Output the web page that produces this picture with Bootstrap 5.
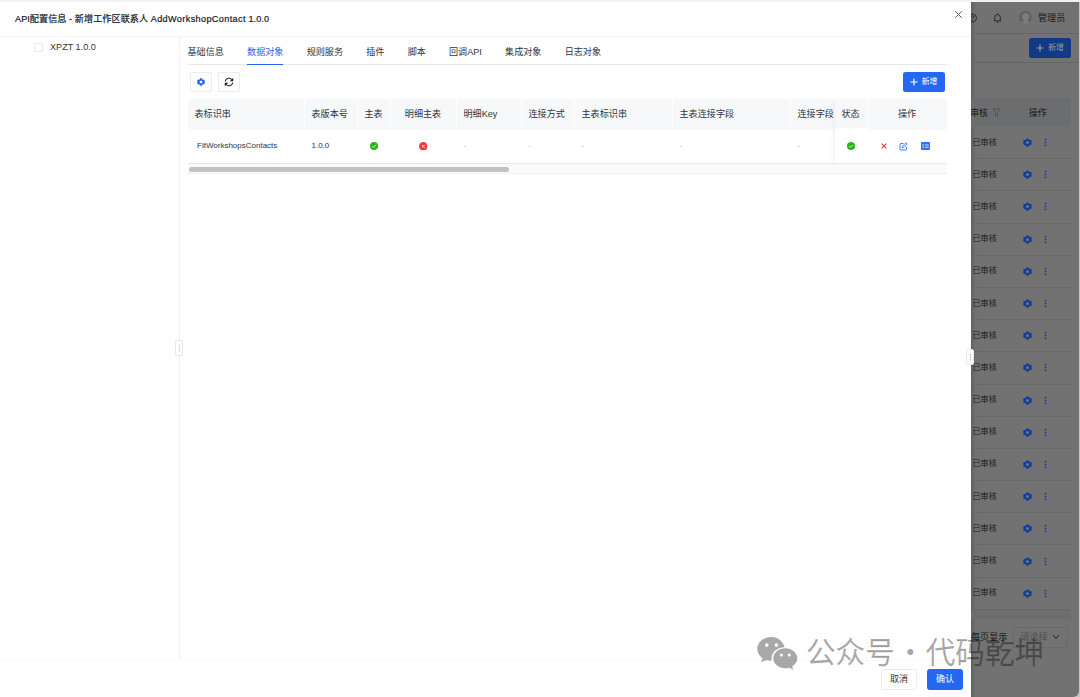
<!DOCTYPE html>
<html lang="zh-CN">
<head>
<meta charset="utf-8">
<title>API配置信息</title>
<link href="https://cdn.jsdelivr.net/npm/bootstrap@5.3.0/dist/css/bootstrap.min.css" rel="stylesheet">
<style>
:root{--blue:#2468f2}
body{font:9.1px/14px "Liberation Sans","Noto Sans CJK SC",sans-serif;color:#303540;background:#f1f1f1;width:1080px;height:697px;overflow:hidden;position:relative}
.win{height:695px;margin-top:2px;background:#c4c4c4}
.drawer{width:971px;background:#fff;position:relative}
.head{height:35px;border-bottom:1px solid #f6f6f6;padding:0 8px 0 15px}
.head h1{font-size:9.1px;font-weight:400;margin:0;line-height:14px;color:#15181f;letter-spacing:.07px;-webkit-text-stroke:.2px}
.head h1 span{letter-spacing:.38px}
.tree{width:179.5px;border-right:1px solid #f0f0f0;height:623px;padding:3px 0 0 34px;position:relative}
.tree i{width:9px;height:9px;border:1px solid #e9e9e9;border-radius:1px;margin-right:7px}
.grip{position:absolute;background:#fff;border:1px solid #e6e6e6;border-radius:2px;width:8px;height:16px}
.pane{width:760px;margin-left:8px}
.tabs{height:28px;border-bottom:1px solid #e8e8ea}
.tabs a{color:#303540;text-decoration:none;height:28px;padding-top:8px;margin-right:23.2px;white-space:nowrap}
.tabs a.on{color:var(--blue);border-bottom:1.5px solid var(--blue)}
.tools{height:34px;padding:0 3px 0 2px}
.sq{width:22px;height:20px;border:1px solid #ececee;border-radius:2px;background:#fff;padding:0}
.add{height:20px;width:42px;border:0;border-radius:2.5px;background:var(--blue);color:#fff;font-size:7.8px;padding:0;gap:4px}
.grid-t{width:759px;display:grid;grid-template-columns:117px 53px 33px 66px 65px 53px 98px 118px 44px 33px 79px}
.th-c{height:28.5px;background:#f7f8fa;border-right:1px solid #fff;padding:1px 7px 0;display:flex;align-items:center;white-space:nowrap;overflow:hidden;color:#303540}
.td-c{height:36.5px;border-bottom:1px solid #e8e8e8;padding:2px 7px 0;display:flex;align-items:center;font-size:8px;white-space:nowrap;box-shadow:inset 0 4px 4px -3px #f4f4f4}
.c{justify-content:center}.m{color:#bbb}
.th-c:last-child,.th-c.end{border-right:0}
.fx{box-shadow:-3px 0 4px -1px rgba(0,0,0,.05)}
.sb{width:759px;height:10px;background:#fafafa;border-bottom:1px solid #f0f0f0;padding:3px 1px 0}
.sb div{width:320px;height:5px;border-radius:3px;background:#c1c1c1}
.foot{height:36px;border-top:1px solid #f9f9f9;padding:7.5px 8px 0 0}
.foot button{height:21px;width:36px;font-size:9px;border-radius:2.5px;padding:0;border:1px solid #ececec;background:#fff;color:#303540}
.foot button.ok{background:var(--blue);border-color:var(--blue);color:#fff}
.back{width:108px;background:#727272;border-bottom-right-radius:6px;overflow:hidden;color:#191b20;box-shadow:inset 4px 0 4px -3px rgba(0,0,0,.25)}
.back .top{height:32px;border-bottom:1px solid #666}
.back .bar{height:29px;border-bottom:1px solid #666;padding-right:8px}
.back .add{background:#133a87;color:#999}
.back .hd{height:29px;margin:35px 8px 0 0;background:#6c6d6f}
.row-b{height:32.2px;margin-right:8px;border-bottom:1px solid #686868;font-size:8.1px;padding:0 0 0 1.5px}
.row-b svg{color:#123f99}
.wm{position:absolute;left:757px;top:632px;color:rgba(0,0,0,.34);font:350 29.6px/38px "Noto Sans CJK SC",sans-serif;white-space:pre;z-index:5}
.wm .txt{-webkit-text-stroke:.3px rgba(0,0,0,.25)}
.sel{width:55px;height:21px;border:1px solid #696969;border-radius:2px;color:#525252}
</style>
</head>
<body>
<svg class="d-none">
<symbol id="gear" viewBox="0 0 24 24"><path fill="currentColor" fill-rule="evenodd" d="M9 1h6l1 3.300 2.200 1.200 3.300-.8 2.500 5-2.300 2.300 2.300 2.300-2.500 5-3.300-.8-2.200 1.200-1 3.300H9l-1-3.300-2.200-1.200-3.300.8-2.500-5L2.300 12 0 9.700l2.500-5 3.300.8L8 4.300zM12 8a4 4 0 1 0 0 8 4 4 0 0 0 0-8z"/></symbol>
<symbol id="plus" viewBox="0 0 10 10"><path d="M5 .5v9M.5 5h9" stroke="currentColor" stroke-width="1.500"/></symbol>
<symbol id="ok" viewBox="0 0 16 16"><circle cx="8" cy="8" r="8" fill="#27b615"/><path d="M4.500 8.200l2.500 2.500 4.500-4.700" fill="none" stroke="#fff" stroke-width="1.600"/></symbol>
<symbol id="bad" viewBox="0 0 16 16"><circle cx="8" cy="8" r="8" fill="#f33b3b"/><path d="M5.500 5.500l5 5m0-5l-5 5" stroke="#fff" stroke-width="1.600"/></symbol>
<symbol id="dots" viewBox="0 0 4 12"><path fill="currentColor" d="M.9 1h2.200v2H.9zM.9 5h2.200v2H.9zM.9 9h2.200v2H.9z"/></symbol>
</svg>
<div class="win d-flex">
<section class="drawer flex-shrink-0">
 <header class="head d-flex align-items-center justify-content-between">
  <h1>API配置信息 - 新增工作区联系人 <span>AddWorkshopContact</span> 1.0.0</h1>
  <svg width="9" height="9" viewBox="0 0 9 9" style="margin-bottom:10px"><path d="M1.300 1.300l6.400 6.400M7.700 1.300L1.300 7.700" stroke="#444" stroke-width=".9"/></svg>
 </header>
 <div class="d-flex">
  <aside class="tree"><div class="d-flex align-items-center"><i></i>XPZT 1.0.0</div>
   <div class="grip d-flex align-items-center justify-content-center" style="left:175px;top:303px"><svg width="3" height="7" viewBox="0 0 4 12" color="#bbb"><use href="#dots"/></svg></div>
  </aside>
  <main class="pane">
   <nav class="tabs d-flex"><a>基础信息</a><a class="on">数据对象</a><a>规则服务</a><a>插件</a><a>脚本</a><a>回调API</a><a>集成对象</a><a>日志对象</a></nav>
   <div class="tools d-flex align-items-center gap-2">
    <button class="sq d-flex align-items-center justify-content-center"><svg width="8" height="8" color="#2468f2"><use href="#gear"/></svg></button>
    <button class="sq d-flex align-items-center justify-content-center" style="margin-left:-2px"><svg width="10" height="10" viewBox="0 0 20 20" fill="none" stroke="#222" stroke-width="2.200"><path d="M2.500 9a7.500 7.500 0 0 1 13.500-3.500M17.500 11A7.500 7.500 0 0 1 4 14.500"/><path fill="#222" stroke="none" d="M18.500 1.500v7h-7zM1.500 18.500v-7h7z"/></svg></button>
    <button class="add ms-auto d-flex align-items-center justify-content-center"><svg width="8" height="8"><use href="#plus"/></svg>新增</button>
   </div>
   <div class="grid-t">
    <div class="th-c">表标识串</div><div class="th-c">表版本号</div><div class="th-c">主表</div><div class="th-c c">明细主表</div><div class="th-c">明细Key</div><div class="th-c">连接方式</div><div class="th-c">主表标识串</div><div class="th-c">主表连接字段</div><div class="th-c end pe-0">连接字段</div><div class="th-c fx">状态</div><div class="th-c end c">操作</div>
    <div class="td-c" style="padding-left:9.5px">FltWorkshopsContacts</div><div class="td-c">1.0.0</div><div class="td-c c"><svg width="8" height="8"><use href="#ok"/></svg></div><div class="td-c c"><svg width="8.500" height="8.500"><use href="#bad"/></svg></div><div class="td-c m">-</div><div class="td-c m">-</div><div class="td-c m">-</div><div class="td-c m">-</div><div class="td-c m">-</div><div class="td-c c fx"><svg width="8" height="8"><use href="#ok"/></svg></div>
    <div class="td-c" style="padding-left:13px"><svg width="6" height="6" viewBox="0 0 6 6"><path d="M.7.7l4.600 4.600m0-4.600L.7 5.300" stroke="#e33340" stroke-width="1.100"/></svg>
     <svg style="margin-left:12.500px" width="9" height="9" viewBox="0 0 18 18" fill="none" stroke="#2f70f5" stroke-width="1.800"><path d="M9 3H3.500Q2 3 2 4.500v10Q2 16 3.500 16h10q1.500 0 1.500-1.500V10M6.500 11.500l.5-3 7-7 2.500 2.500-7 7z"/></svg>
     <svg style="margin-left:12.500px" width="9" height="8" viewBox="0 0 18 16"><rect width="18" height="16" rx="2" fill="#2f70f5"/><path d="M2.500 6h4M8.500 6h7M2.500 10.500h4M8.500 10.500h7" stroke="#fff" stroke-width="1.700"/></svg></div>
   </div>
   <div class="sb"><div></div></div>
  </main>
 </div>
 <footer class="foot d-flex justify-content-end"><button style="margin-right:10px">取消</button><button class="ok">确认</button></footer>
 <div class="grip d-flex align-items-center justify-content-center" style="left:966px;top:347px"><svg width="3" height="7" viewBox="0 0 4 12" color="#aaa"><use href="#dots"/></svg></div>
</section>
<aside class="back flex-shrink-0">
 <div class="top d-flex align-items-center"><svg style="margin-left:-3px" width="9" height="10" viewBox="0 0 18 20" fill="none" stroke="#222" stroke-width="1.600"><circle cx="9" cy="10" r="8"/><path d="M6.500 8q0-2.500 2.500-2.500T11.500 8Q11.500 9.500 9 11v1.500M9 14v1.500"/></svg>
  <svg style="margin-left:16px" width="9" height="10" viewBox="0 0 18 20" fill="none" stroke="#222" stroke-width="1.800"><path d="M1.500 15.500h15M3.500 15V8.500a5.500 5.500 0 0 1 11 0V15M9 1v2M7 18.500h4"/></svg>
  <svg style="margin-left:17px" width="13" height="13" viewBox="0 0 26 26"><circle cx="13" cy="13" r="13" fill="#5d6268"/><path fill="#7c7c7c" d="M13 4a7 7 0 0 1 7 8q-.5 4-3 6l0 2 5 2.500Q17 26 13 26T4 22.500L9 20v-2q-2.500-2-3-6a7 7 0 0 1 7-8z"/></svg>
  <span style="margin-left:6px">管理员</span></div>
 <div class="bar d-flex align-items-center justify-content-end"><button class="add d-flex align-items-center justify-content-center"><svg width="8" height="8"><use href="#plus"/></svg>新增</button></div>
 <div class="hd d-flex align-items-center"><span style="margin-left:-1px">审核</span><svg style="margin-left:4px" width="9" height="9" viewBox="0 0 18 18" fill="none" stroke="#4c4c4c" stroke-width="1.400"><path d="M2 2h14l-5 7v7H7V9z"/></svg><span style="margin-left:27.500px">操作</span></div>
 <div id="rows"></div>
 <div style="height:9px;margin-right:8px;background:#6d6d6d"></div>
 <div class="d-flex align-items-center" style="margin-top:8px"><span class="text-nowrap">每页显示</span><div class="sel d-flex align-items-center justify-content-between" style="margin-left:6px;padding:0 7px 0 6px"><span class="text-nowrap">请选择</span><svg class="flex-shrink-0" width="8" height="6" viewBox="0 0 8 6"><path d="M1 1l3 3.500L7 1" fill="none" stroke="#222"/></svg></div></div>
</aside>
</div>
<div class="wm d-flex align-items-center"><svg width="41" height="34" viewBox="0 0 41 34" fill="currentColor" fill-rule="evenodd" style="margin-right:8px;margin-top:3px"><path d="M14.500 1C6.500 1 .3 6.300.3 13c0 3.800 2 7 5.200 9.200L4.200 26.300l4.900-2.400c1.800.5 3.600.8 5.700.7-1.500-7 4.400-13.400 12.800-13.300C26.200 5.300 21 1 14.500 1zM9.800 7.300a1.800 1.800 0 1 1 0 3.600 1.800 1.800 0 0 1 0-3.600zm9.600 0a1.800 1.800 0 1 1 0 3.600 1.800 1.800 0 0 1 0-3.600z"/><path d="M28.300 12.300c-6.700 0-12 4.500-12 10s5.300 10 12 10c1.400 0 2.700-.2 4-.6l3.900 2-1-3.400c3.100-1.900 5.100-4.700 5.100-8 0-5.500-5.400-10-12-10zM24.400 17.500a1.500 1.500 0 1 1 0 3 1.500 1.500 0 0 1 0-3zm7.800 0a1.500 1.500 0 1 1 0 3 1.500 1.500 0 0 1 0-3z"/></svg><span class="txt">公众号</span><span class="text-center" style="width:31px">·</span><span class="txt">代码乾坤</span></div>
<script src="https://cdn.jsdelivr.net/npm/bootstrap@5.3.0/dist/js/bootstrap.bundle.min.js"></script>
<script>
document.getElementById('rows').innerHTML=Array(15).fill('<div class="row-b d-flex align-items-center"><span class="text-nowrap">已审核</span><svg style="margin-left:26px" width="9" height="9"><use href="#gear"/></svg><svg style="margin-left:12px" width="3" height="9"><use href="#dots"/></svg></div>').join('');
</script>
</body>
</html>
